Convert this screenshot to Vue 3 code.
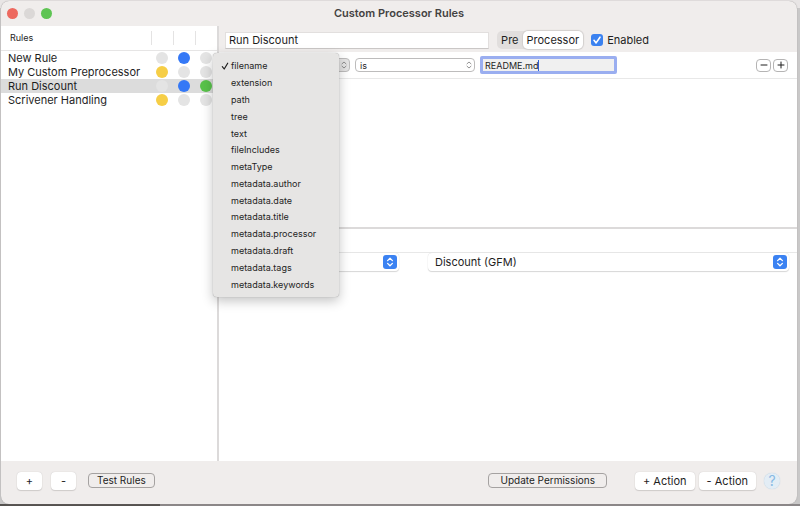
<script setup>
import { ref } from 'vue'

const rules = [
  { name: 'New Rule', pre: false, proc: true, on: false },
  { name: 'My Custom Preprocessor', pre: true, proc: false, on: false },
  { name: 'Run Discount', pre: false, proc: true, on: true },
  { name: 'Scrivener Handling', pre: true, proc: false, on: false },
]
const selected = ref('Run Discount')
const fields = [
  'filename', 'extension', 'path', 'tree', 'text', 'fileIncludes', 'metaType',
  'metadata.author', 'metadata.date', 'metadata.title', 'metadata.processor',
  'metadata.draft', 'metadata.tags', 'metadata.keywords',
]
const field = ref('filename')
const ruleName = ref('Run Discount')
const value = ref('README.md')
const enabled = ref(true)
const mode = ref('Processor')
</script>

<template>
  <div class="desktop">
    <main class="window">
      <header class="titlebar">
        <div class="lights">
          <button class="light red" aria-label="Close"></button>
          <button class="light grey" aria-label="Minimize"></button>
          <button class="light green" aria-label="Zoom"></button>
        </div>
        <h1>Custom Processor Rules</h1>
      </header>

      <div class="body">
        <aside class="sidebar">
          <table>
            <colgroup><col /><col class="dotcol" /><col class="dotcol" /><col class="dotcol" /></colgroup>
            <thead>
              <tr><th>Rules</th><td><i></i></td><td><i></i></td><td><i></i></td></tr>
            </thead>
            <tbody>
              <tr v-for="r in rules" :key="r.name" :class="{ selected: r.name === selected }" @click="selected = r.name">
                <td class="name">{{ r.name }}</td>
                <td><span class="dot" :class="{ yellow: r.pre }"></span></td>
                <td><span class="dot" :class="{ blue: r.proc }"></span></td>
                <td><span class="dot" :class="{ green: r.on }"></span></td>
              </tr>
            </tbody>
          </table>
        </aside>

        <section class="detail">
          <div class="rulebar">
            <input v-model="ruleName" class="rulename" type="text" aria-label="Rule name" />
            <div class="segmented">
              <button :class="{ active: mode === 'Pre' }" @click="mode = 'Pre'">Pre</button>
              <button :class="{ active: mode === 'Processor' }" @click="mode = 'Processor'">Processor</button>
            </div>
            <label class="enabled">
              <span class="check">
                <input v-model="enabled" type="checkbox" />
                <svg v-if="enabled" viewBox="0 0 12 12"><path d="M3 6.3 5.1 8.9 9 3.2" /></svg>
              </span>
              Enabled
            </label>
          </div>

          <div class="conditions">
            <div class="condition">
              <div class="picker small pressed fieldpick">
                <select v-model="field" aria-label="Field">
                  <option v-for="f in fields" :key="f">{{ f }}</option>
                </select>
                <svg viewBox="0 0 8 10"><path d="M2 3.8 4 2 6 3.8M2 6.2 4 8 6 6.2" /></svg>
              </div>
              <div class="picker small oppick">
                <select aria-label="Comparison"><option>is</option></select>
                <svg viewBox="0 0 8 10"><path d="M2 3.8 4 2 6 3.8M2 6.2 4 8 6 6.2" /></svg>
              </div>
              <div class="valuebox">
                <input v-model="value" type="text" aria-label="Value" />
                <span class="caret"></span>
              </div>
              <div class="rowbuttons">
                <button aria-label="Remove condition"><svg viewBox="0 0 12 12"><path d="M3 6h6" /></svg></button>
                <button aria-label="Add condition"><svg viewBox="0 0 12 12"><path d="M3 6h6M6 3v6" /></svg></button>
              </div>
            </div>
          </div>

          <div class="actions">
            <div class="actionhead"></div>
            <div class="actionrow">
              <div class="picker large">
                <select aria-label="Action"></select>
                <svg class="badge" viewBox="0 0 14 14"><path d="M4.6 5.6 7 3.3 9.4 5.6M4.6 8.4 7 10.7 9.4 8.4" /></svg>
              </div>
              <div class="picker large">
                <select aria-label="Processor"><option>Discount (GFM)</option></select>
                <svg class="badge" viewBox="0 0 14 14"><path d="M4.6 5.6 7 3.3 9.4 5.6M4.6 8.4 7 10.7 9.4 8.4" /></svg>
              </div>
            </div>
          </div>
        </section>

        <ul class="menu" role="listbox" aria-label="Field">
          <li v-for="f in fields" :key="f" role="option" :aria-selected="f === field" @click="field = f">
            <svg viewBox="0 0 8 8"><path v-if="f === field" d="M1.3 4.6 3.2 7 6.7 1.2" /></svg>{{ f }}
          </li>
        </ul>
      </div>

      <footer class="footer">
        <button class="push plus">+</button>
        <button class="push minus">-</button>
        <button class="outline">Test Rules</button>
        <span class="spacer"></span>
        <button class="outline update">Update Permissions</button>
        <div class="pair">
          <button class="push">+ Action</button>
          <button class="push">- Action</button>
        </div>
        <button class="help" aria-label="Help">?</button>
      </footer>
    </main>
  </div>
</template>

<style>
body {
  margin: 0;
  background: #cfcdcd;
}
</style>

<style scoped>
* {
  box-sizing: border-box;
}
.desktop {
  display: flex;
  min-height: 100vh;
  padding: 1px 3px 2px 1px;
  background:
    linear-gradient(#55524f, #55524f) left bottom / 20% 2px no-repeat,
    linear-gradient(#8b8788, #8b8788) left bottom / 100% 2px no-repeat,
    linear-gradient(#e8e5e5, #e8e5e5) left top / 100% 8px no-repeat,
    #c9c8c8;
  font-family: Inter, "Liberation Sans", sans-serif;
  font-size: 11px;
  line-height: 14px;
  color: #1e1e1e;
}
button,
input,
select {
  margin: 0;
  padding: 0;
  border: 0;
  font: inherit;
  color: inherit;
  background: none;
  appearance: none;
  outline: none;
}
svg {
  fill: none;
  stroke: currentColor;
  stroke-linecap: round;
  stroke-linejoin: round;
}
.window {
  flex: 1;
  display: flex;
  flex-direction: column;
  border-radius: 8px;
  overflow: hidden;
  background: #f0edec;
  box-shadow: 0 0 1px #8a8888;
}
.titlebar {
  display: grid;
  grid-template-columns: 1fr auto 1fr;
  align-items: center;
  height: 25px;
  padding: 0 6px 1px;
}
h1 {
  margin: 0;
  font-size: 11px;
  font-weight: 600;
  color: #444242;
}
.lights {
  display: flex;
  gap: 6px;
}
.light {
  width: 11px;
  height: 11px;
  border-radius: 50%;
}
.light.red { background: #ed695f; }
.light.grey { background: #dbd8d7; }
.light.green { background: #5ec453; }

.body {
  position: relative;
  flex: 1;
  display: flex;
}
.sidebar {
  width: 218px;
  border-right: 2px solid #dcdada;
  background: #fff;
}
table {
  width: 100%;
  table-layout: fixed;
  border-collapse: collapse;
}
.dotcol { width: 22px; }
th, td { padding: 0; height: 14px; }
th {
  height: 24px;
  padding-left: 9px;
  font-size: 9px;
  font-weight: 400;
  text-align: left;
}
thead tr { border-bottom: 1px solid #e6e5e5; }
thead i {
  display: block;
  height: 14px;
  border-left: 1px solid #e4e3e3;
}
.name {
  padding-left: 7px;
  white-space: nowrap;
}
.selected { background: #dcdcdc; }
.dot {
  display: block;
  width: 12px;
  height: 12px;
  margin: 0 auto;
  border-radius: 50%;
  background: #e4e4e4;
}
.dot.yellow { background: #f6ce46; }
.dot.blue { background: #3478f6; }
.dot.green { background: #58c24a; }

.detail {
  flex: 1;
  min-width: 0;
  display: flex;
  flex-direction: column;
  background: #fff;
}
.rulebar {
  display: flex;
  align-items: center;
  gap: 8px;
  height: 26px;
  padding: 2px 148px 0 6px;
  background: #f0edec;
}
.rulename {
  flex: 1;
  min-width: 0;
  height: 17px;
  padding: 0 3px;
  border: 1px solid #e2dfde;
  border-bottom-color: #cac7c6;
  background: #fff;
}
.segmented {
  display: flex;
  height: 18px;
  border-radius: 5px;
  background: #e1dedd;
}
.segmented button {
  padding: 0 4px;
  border-radius: 5px;
}
.segmented .active {
  background: #fff;
  box-shadow: 0 0 1px 1px #d2cfce;
}
.enabled {
  display: flex;
  align-items: center;
  gap: 4px;
}
.check {
  position: relative;
  display: flex;
}
.check input {
  width: 12px;
  height: 12px;
  border-radius: 3px;
  background: #fff;
}
.check input:checked { background: #3b82f0; }
.check svg {
  position: absolute;
  inset: 0;
  color: #fff;
  stroke-width: 1.6;
  pointer-events: none;
}

.conditions {
  height: 177px;
  border-bottom: 2px solid #dcdada;
}
.condition {
  display: flex;
  align-items: center;
  gap: 5px;
  height: 27px;
  padding: 0 9px 0 6px;
  border-bottom: 1px solid #e8e8e8;
  font-size: 9px;
}
.picker {
  position: relative;
  display: flex;
}
.picker select { width: 100%; }
.picker svg {
  position: absolute;
  pointer-events: none;
}
.small { height: 14px; }
.small select {
  padding: 0 4px;
  border: 1px solid #bdbcbc;
  border-radius: 4px;
  background: #fff;
}
.small svg {
  right: 2px;
  top: 2px;
  width: 8px;
  height: 10px;
  color: #777;
  stroke-width: 0.8;
}
.pressed select { background: #e4e3e3; }
.fieldpick { width: 125px; }
.oppick { width: 120px; }
.valuebox {
  display: flex;
  align-items: center;
  width: 137px;
  height: 18px;
  padding: 1px 2px 0;
  border: 3px solid #9aaef0;
  border-radius: 2px;
  background: #f0f0f0;
}
.valuebox input {
  field-sizing: content;
  caret-color: transparent;
}
.caret {
  width: 1px;
  height: 11px;
  background: #2f62d8;
}
.rowbuttons {
  display: flex;
  gap: 2px;
  margin-left: auto;
}
.rowbuttons button {
  display: flex;
  align-items: center;
  justify-content: center;
  width: 15px;
  height: 13px;
  border: 1px solid #b5b4b4;
  border-radius: 4px;
}
.rowbuttons svg {
  width: 12px;
  height: 12px;
  flex: none;
}

.actionhead {
  height: 24px;
  border-bottom: 1px solid #e8e8e8;
}
.actionrow {
  display: grid;
  grid-template-columns: 174px 1fr;
  gap: 29px;
  padding: 0 8px 0 6px;
}
.large select {
  height: 18px;
  padding: 0 7px;
  border-radius: 4px;
  background: #fff;
  box-shadow: 0 1px 1px #d6d6d6, 0 0 1px #d0d0d0;
}
.badge {
  right: 2px;
  top: 2px;
  width: 14px;
  height: 14px;
  border-radius: 3px;
  background: #3b82f2;
  color: #fff;
  stroke-width: 1.3;
}

.menu {
  position: absolute;
  left: 212px;
  top: 27px;
  display: grid;
  grid-auto-rows: 1fr;
  width: 126px;
  height: 244px;
  margin: 0;
  padding: 5px 0 4px;
  list-style: none;
  border-radius: 4px;
  background: #e6e5e4;
  box-shadow: 0 0 1px #8c8c8c, 0 4px 12px rgba(0, 0, 0, 0.24);
  font-size: 9px;
}
.menu li {
  display: flex;
  align-items: center;
  gap: 2px;
  padding-left: 8px;
}
.menu svg {
  width: 8px;
  height: 8px;
  stroke-width: 1.2;
}

.footer {
  display: flex;
  align-items: center;
  height: 43px;
  padding: 0 17px 4px 16px;
}
.push {
  height: 18px;
  padding: 0 8px;
  border-radius: 4px;
  background: #fff;
  box-shadow: 0 0 1px #bfbcbb, 0 1px 1px #d0cdcc;
}
.plus, .minus {
  width: 25px;
  margin-right: 9px;
}
.minus { margin-right: 12px; }
.outline {
  height: 15px;
  padding: 0 8px;
  border: 1px solid #a5a2a1;
  border-radius: 4px;
  font-size: 10px;
  line-height: 13px;
}
.update {
  padding: 0 11px;
  margin-right: 28px;
}
.spacer { flex: 1; }
.pair {
  display: flex;
  gap: 4px;
  margin-right: 8px;
}
.help {
  width: 16px;
  height: 16px;
  border-radius: 50%;
  background: #e3edf5;
  box-shadow: 0 0 1px #a9c6dc;
  color: #87b9e3;
  font-size: 14px;
}
</style>
